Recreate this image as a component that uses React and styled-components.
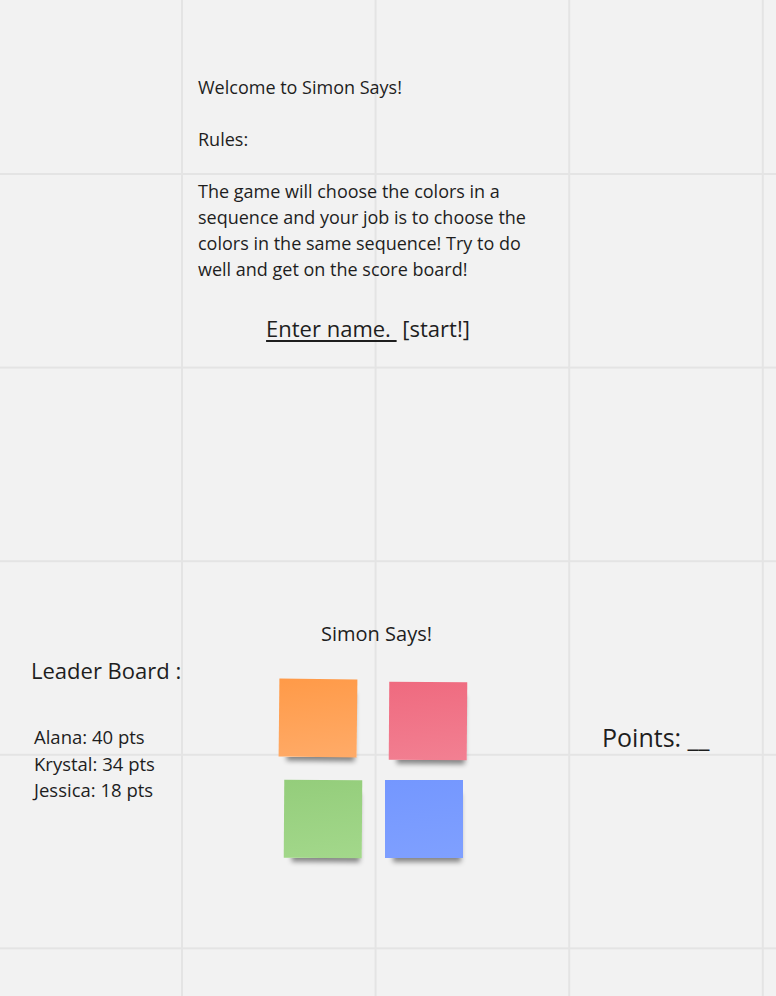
import React from "react";
import styled, { createGlobalStyle } from "styled-components";

const GlobalStyle = createGlobalStyle`
  html, body {
    margin: 0;
    padding: 0;
    min-height: 100%;
  }
  body {
    font-family: "Open Sans", "Noto Sans", sans-serif;
    color: #1e1e1e;
    background-color: #f2f2f2;
    background-image:
      linear-gradient(to right, #e4e4e4 2px, transparent 2px),
      linear-gradient(to bottom, #e4e4e4 2px, transparent 2px);
    background-size: 193.6px 193.6px;
    background-position: 181px 173px;
  }
`;

const NOTES = [
  { id: "orange", top: "#ff9a48", bottom: "#ffab68", dx: 0, dy: 0, tilt: 0.6 },
  { id: "pink", top: "#ef6a7f", bottom: "#f28092", dx: 0, dy: 3, tilt: 0.4 },
  { id: "green", top: "#94cd7b", bottom: "#a3d88b", dx: 5, dy: 0, tilt: 0.4 },
  { id: "blue", top: "#7497ff", bottom: "#7fa0ff", dx: -4, dy: 0, tilt: 0 },
];

const LEADERS = [
  { name: "Alana", pts: 40 },
  { name: "Krystal", pts: 34 },
  { name: "Jessica", pts: 18 },
];

export default function App() {
  return (
    <Board>
      <GlobalStyle />

      <Rules>
        <Para>Welcome to Simon Says!</Para>
        <Para>Rules:</Para>
        <Para>
          The game will choose the colors in a sequence and your job is to
          choose the colors in the same sequence! Try to do well and get on the
          score board!
        </Para>
        <StartLine>
          <NameLink>Enter name.&nbsp;</NameLink> [start!]
        </StartLine>
      </Rules>

      <GameRow>
        <LeaderColumn>
          <LeaderTitle>Leader Board :</LeaderTitle>
          <LeaderList>
            {LEADERS.map((l) => (
              <li key={l.name}>
                {l.name}: {l.pts} pts
              </li>
            ))}
          </LeaderList>
        </LeaderColumn>

        <SimonColumn>
          <SimonTitle>Simon Says!</SimonTitle>
          <NoteGrid>
            {NOTES.map((n) => (
              <Note
                key={n.id}
                $top={n.top}
                $bottom={n.bottom}
                $dx={n.dx}
                $dy={n.dy}
                $tilt={n.tilt}
              />
            ))}
          </NoteGrid>
        </SimonColumn>

        <PointsColumn>
          <Points>Points: __</Points>
        </PointsColumn>
      </GameRow>
    </Board>
  );
}

const Board = styled.div`
  width: 776px;
  min-height: 996px;
  display: flex;
  flex-direction: column;
`;

const Rules = styled.div`
  width: 340px;
  margin: 74px 0 0 198px;
  display: flex;
  flex-direction: column;
  gap: 26px;
`;

const Para = styled.p`
  margin: 0;
  font-size: 18px;
  line-height: 26px;
`;

const StartLine = styled.div`
  margin-top: 4px;
  font-size: 22px;
  line-height: 32px;
  text-align: center;
`;

const NameLink = styled.span`
  text-decoration: underline;
  text-decoration-thickness: 1.5px;
  text-underline-offset: 3px;
`;

const GameRow = styled.div`
  margin-top: 256px;
  display: flex;
  align-items: flex-start;
`;

const LeaderColumn = styled.div`
  flex: 0 0 279px;
  padding: 55px 0 0 31px;
  box-sizing: border-box;
`;

const LeaderTitle = styled.div`
  font-size: 22px;
  line-height: 30px;
`;

const LeaderList = styled.ul`
  list-style: none;
  margin: 39px 0 0 3px;
  padding: 0;
  font-size: 18.5px;
  line-height: 26.5px;
`;

const SimonColumn = styled.div`
  flex: 0 0 195px;
  padding-top: 20px;
  display: flex;
  flex-direction: column;
`;

const SimonTitle = styled.div`
  font-size: 20px;
  line-height: 28px;
  text-align: center;
`;

const NoteGrid = styled.div`
  margin-top: 31px;
  display: grid;
  grid-template-columns: 78px 78px;
  column-gap: 32px;
  row-gap: 20px;
  align-items: start;
`;

const Note = styled.div`
  width: 78px;
  height: 78px;
  margin-left: ${(p) => p.$dx}px;
  margin-top: ${(p) => p.$dy}px;
  transform: rotate(${(p) => p.$tilt}deg);
  background: linear-gradient(172deg, ${(p) => p.$top} 0%, ${(p) => p.$bottom} 100%);
  box-shadow: 3px 9px 5px -5px rgba(0, 0, 0, 0.45);
`;

const PointsColumn = styled.div`
  padding: 120px 0 0 128px;
`;

const Points = styled.div`
  font-size: 25px;
  line-height: 34px;
  white-space: nowrap;
`;
